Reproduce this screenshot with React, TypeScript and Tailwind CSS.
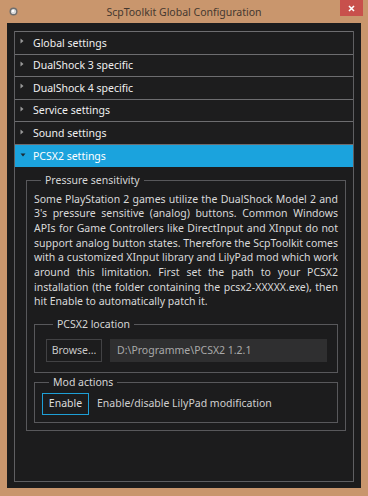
import React from "react";

const rows = ["Global settings", "DualShock 3 specific", "DualShock 4 specific", "Service settings", "Sound settings"];

const para = [
  "Some PlayStation 2 games utilize the DualShock Model 2 and",
  "3's pressure sensitive (analog) buttons. Common Windows",
  "APIs for Game Controllers like DirectInput and XInput do not",
  "support analog button states. Therefore the ScpToolkit comes",
  "with a customized XInput library and LilyPad mod which work",
  "around this limitation. First set the path to your PCSX2",
  "installation (the folder containing the pcsx2-XXXXX.exe), then",
];

function RightArrow() {
  return (
    <svg width="4" height="6" viewBox="0 0 4 6" className="shrink-0">
      <path d="M0.5 0.5 L3.5 3 L0.5 5.5 Z" fill="#9a9a9a" />
    </svg>
  );
}

function DownArrow() {
  return (
    <svg width="6" height="4" viewBox="0 0 6 4" className="shrink-0">
      <path d="M0.5 0.5 L5.5 0.5 L3 3.5 Z" fill="#1b2a33" />
    </svg>
  );
}

export default function App() {
  return (
    <div className="w-[368px] h-[496px] bg-[#c9966d] flex flex-col font-['Noto_Sans',sans-serif] overflow-hidden">
      {/* title bar */}
      <div className="relative h-[23px] shrink-0 flex items-center justify-center">
        <div className="absolute left-[9px] top-[7px]">
          <svg width="9" height="9" viewBox="0 0 9 9">
            <circle cx="4.5" cy="4.5" r="4" fill="#6f6f6f" />
            <circle cx="4.5" cy="4.5" r="2.6" fill="#d8d8d8" />
            <circle cx="4" cy="4" r="1.2" fill="#ffffff" />
          </svg>
        </div>
        <span className="text-[10.5px] leading-none text-[#45382f] mt-[1px]">ScpToolkit Global Configuration</span>
        <div className="absolute right-[5px] top-0 w-[23px] h-[16px] bg-[#c8504c] flex items-center justify-center">
          <svg width="7" height="7" viewBox="0 0 7 7">
            <path d="M1 1 L6 6 M6 1 L1 6" stroke="#ffffff" strokeWidth="1.6" />
          </svg>
        </div>
      </div>

      {/* client area */}
      <div className="mx-[7px] h-[465px] shrink-0 bg-[#1c1c1d] pt-[8px] pb-[6px] px-[7px] flex flex-col">
        <div className="flex-1 border-l border-r border-b border-[#5f5f62] flex flex-col">
          {rows.map((r) => (
            <div key={r} className="h-[22.6px] shrink-0 border-t border-[#6d6d70] flex items-center bg-[#1d1d1e]">
              <div className="w-[18px] pl-[5px] flex items-center -mt-[3px]">
                <RightArrow />
              </div>
              <span className="text-[10.5px] leading-none text-[#f0f0f0]">{r}</span>
            </div>
          ))}
          <div className="h-[22.6px] shrink-0 border-t border-[#6d6d70] flex items-center bg-[#1ba3dd]">
            <div className="w-[18px] pl-[5px] flex items-center -mt-[2px]">
              <DownArrow />
            </div>
            <span className="text-[10.5px] leading-none text-[#ffffff]">PCSX2 settings</span>
          </div>

          {/* content */}
          <div className="flex-1 pl-[11px] pr-[10px] pt-[6px]">
            <fieldset className="border border-[#58585b] px-[7px] pb-[7px]">
              <legend className="ml-[7px] px-[4px] text-[10.5px] leading-[15px] text-[#d6d6d6]">Pressure sensitivity</legend>
              <div className="mt-[4px] text-[10.5px] leading-[14.7px] text-[#d9d9d9]">
                {para.map((l) => (
                  <div key={l} className="text-justify [text-align-last:justify] whitespace-nowrap">{l}</div>
                ))}
                <div>hit Enable to automatically patch it.</div>
              </div>

              <fieldset className="mt-[8px] border border-[#58585b] pl-[11px] pr-[10px] pb-[10px]">
                <legend className="ml-[7px] px-[4px] text-[10.5px] leading-[15px] text-[#d6d6d6]">PCSX2 location</legend>
                <div className="mt-[7px] flex items-center gap-[8px]">
                  <div className="w-[56px] h-[23px] border border-[#424244] bg-[#1c1c1d] flex items-center justify-center text-[10.5px] text-[#c8c8c8]">
                    Browse...
                  </div>
                  <div className="flex-1 h-[23px] bg-[#2f2f30] flex items-center pl-[7px] text-[10.5px] text-[#a9a9a9]">
                    D:\Programme\PCSX2 1.2.1
                  </div>
                </div>
              </fieldset>

              <fieldset className="mt-[2px] border border-[#58585b] pl-[7px] pr-[10px] pb-[7px]">
                <legend className="ml-[7px] px-[4px] text-[10.5px] leading-[15px] text-[#d6d6d6]">Mod actions</legend>
                <div className="mt-[3px] flex items-center gap-[8px]">
                  <div className="w-[47px] h-[22px] border-[1.5px] border-[#1e9fd6] flex items-center justify-center text-[10.5px] text-[#dcdcdc]">
                    Enable
                  </div>
                  <span className="text-[10.5px] text-[#d0d0d0]">Enable/disable LilyPad modification</span>
                </div>
              </fieldset>
            </fieldset>
          </div>
        </div>
      </div>
    </div>
  );
}
